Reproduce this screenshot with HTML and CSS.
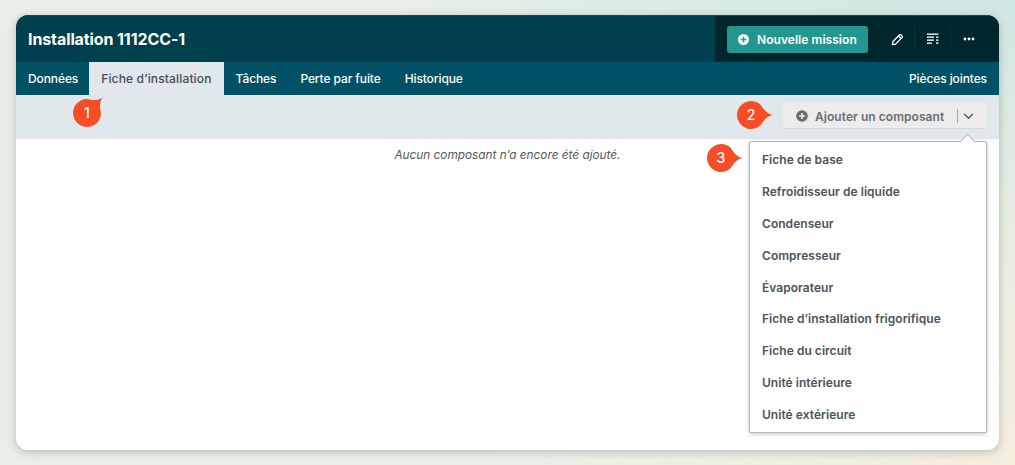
FILE: index.html
```html
<!DOCTYPE html>
<html lang="fr">
<head>
<meta charset="utf-8">
<title>Installation 1112CC-1</title>
<link rel="stylesheet" href="styles.css">
</head>
<body>
<main class="card">
  <header class="head">
    <h1 class="title">Installation 1112CC-1</h1>
    <div class="actions">
      <button class="primary">
        <svg class="plus" viewBox="0 0 12 12" width="11" height="11"><circle cx="6" cy="6" r="6" fill="#fff"/><path d="M6 3v6M3 6h6" stroke="#22968f" stroke-width="1.8"/></svg>
        Nouvelle mission
      </button>
      <div class="icon-btn">
        <svg class="pencil" viewBox="0 0 14 14" width="13" height="13" fill="none" stroke="#fff" stroke-width="1.4" stroke-linejoin="round"><path d="M1.5 12.500l.6-3.300 6.900-7a1.400 1.400 0 0 1 2 0l.8.800a1.400 1.400 0 0 1 0 2l-6.900 7z"/><path d="M8 3.300l2.700 2.700"/></svg>
      </div>
      <div class="icon-btn">
        <svg viewBox="0 0 12 12" width="12" height="12" fill="#fff"><rect x="0" y="0.500" width="11.500" height="1.300"/><rect x="0" y="3.500" width="7" height="1.300"/><rect x="9" y="3.500" width="2.500" height="1.300"/><rect x="0" y="6.500" width="7" height="1.300"/><rect x="9" y="6.500" width="2.500" height="1.300"/><rect x="0" y="9.500" width="5" height="1.300"/><rect x="9" y="9.500" width="2.500" height="1.300"/></svg>
      </div>
      <div class="icon-btn last">
        <svg viewBox="0 0 12 4" width="12" height="4" fill="#fff"><circle cx="2" cy="2" r="1.400"/><circle cx="6" cy="2" r="1.400"/><circle cx="10" cy="2" r="1.400"/></svg>
      </div>
    </div>
  </header>
  <nav class="tabs">
    <a class="tab">Données</a>
    <a class="tab active">Fiche d’installation</a>
    <a class="tab">Tâches</a>
    <a class="tab">Perte par fuite</a>
    <a class="tab">Historique</a>
    <a class="tab end">Pièces jointes</a>
  </nav>
  <div class="toolbar">
    <div class="add">
      <svg viewBox="0 0 12 12" width="12" height="12"><circle cx="6" cy="6" r="5.800" fill="#666b6f"/><path d="M6 3v6M3 6h6" stroke="#ececec" stroke-width="1.600"/></svg>
      <span class="add-label">Ajouter un composant</span>
      <span class="add-sep"></span>
      <svg class="chev" viewBox="0 0 12 8" width="11" height="7" fill="none" stroke="#4a5057" stroke-width="1.500"><path d="M1 1l5 5 5-5"/></svg>
    </div>
  </div>
  <p class="empty">Aucun composant n’a encore été ajouté.</p>

  <ul class="menu">
    <li>Fiche de base</li>
    <li>Refroidisseur de liquide</li>
    <li>Condenseur</li>
    <li>Compresseur</li>
    <li>Évaporateur</li>
    <li>Fiche d’installation frigorifique</li>
    <li>Fiche du circuit</li>
    <li>Unité intérieure</li>
    <li>Unité extérieure</li>
  </ul>
</main>

<div class="badge b1"><svg viewBox="0 0 38 30" width="38" height="30"><path class="drop" d="M14 1a14 14 0 0 1 9.500 3.700C26 8 29 14 36 15c-7 1-10 7-12.500 10.300A14 14 0 1 1 14 1z"/></svg><span>1</span></div>
<div class="badge b2"><svg viewBox="0 0 38 30" width="38" height="30"><path class="drop" d="M14 1a14 14 0 0 1 9.500 3.700C26 8 29 14 36 15c-7 1-10 7-12.500 10.300A14 14 0 1 1 14 1z"/></svg><span>2</span></div>
<div class="badge b3"><svg viewBox="0 0 38 30" width="38" height="30"><path class="drop" d="M14 1a14 14 0 0 1 9.500 3.700C26 8 29 14 36 15c-7 1-10 7-12.500 10.300A14 14 0 1 1 14 1z"/></svg><span>3</span></div>
</body>
</html>
```
FILE: styles.css
```css
* { box-sizing: border-box; }
html, body { margin: 0; height: 100%; }
body {
  position: relative;
  width: 1015px;
  height: 465px;
  overflow: hidden;
  padding: 15px 16px;
  font-family: Inter, "Liberation Sans", sans-serif;
  background:
    radial-gradient(circle at 100% 100%, #f5efdf 0, rgba(245, 239, 223, 0) 520px),
    radial-gradient(circle at 100% 0, #cbe6e4 0, rgba(203, 230, 228, 0) 620px),
    #e8efe7;
}
.card {
  position: relative;
  height: 435px;
  background: #fff;
  border-radius: 12px;
  box-shadow: 0 2px 8px rgba(0, 40, 50, .25);
  overflow: hidden;
}
.head {
  display: flex;
  justify-content: space-between;
  align-items: stretch;
  height: 47px;
  background: #003f4d;
  border-top: 1px solid #00505f;
}
.title {
  margin: 0;
  padding-left: 12px;
  align-self: center;
  color: #fff;
  font-size: 16px;
  font-weight: 700;
  line-height: 1;
  letter-spacing: -.1px;
}
.actions {
  display: flex;
  align-items: center;
  width: 284px;
  padding-left: 12px;
  background: #02262e;
}
.primary {
  display: flex;
  align-items: center;
  gap: 8px;
  width: 141px;
  height: 27px;
  margin-right: 11px;
  padding: 0 0 0 11px;
  border: 0;
  border-radius: 3px;
  background: #22968f;
  color: #fff;
  font: 600 12px Inter, "Liberation Sans", sans-serif;
  letter-spacing: .05px;
}
.icon-btn {
  display: flex;
  align-items: center;
  justify-content: center;
  width: 36px;
  height: 27px;
  border-right: 1px solid #07323b;
}
.icon-btn.last { border-right: 0; }
.pencil { margin-left: 2px; }
.tabs {
  display: flex;
  height: 33px;
  background: #005166;
}
.tab {
  display: flex;
  align-items: center;
  padding: 0 12px;
  color: #fff;
  font-size: 12px;
  font-weight: 500;
  letter-spacing: -.1px;
}
.tab:first-child { padding-right: 11px; }
.tab.active {
  background: #e1e8eb;
  color: #434c57;
  letter-spacing: .15px;
}
.tab.end { margin-left: auto; }
.toolbar {
  display: flex;
  justify-content: flex-end;
  height: 44px;
  padding: 8px 12px 0 0;
  background: #e1e8eb;
}
.add {
  display: flex;
  align-items: center;
  width: 204px;
  height: 25px;
  padding: 1px 0 0 13px;
  background: #ececec;
  border-radius: 2px;
  box-shadow: 0 1px 1px rgba(0, 0, 0, .06);
}
.add-label {
  margin-left: 7px;
  color: #6a6e72;
  font-size: 12px;
  font-weight: 600;
  letter-spacing: .05px;
  white-space: nowrap;
}
.add-sep {
  width: 1px;
  height: 14px;
  margin-left: 13px;
  background: #a9adb0;
}
.chev { margin-left: 5px; }
.empty {
  margin: 0;
  padding-top: 9px;
  text-align: center;
  color: #55595d;
  font-size: 11.8px;
  font-style: italic;
  line-height: 14px;
}
.menu {
  position: absolute;
  left: 733px;
  top: 126px;
  width: 238px;
  height: 292px;
  margin: 0;
  padding: 2px 0 0 12px;
  list-style: none;
  background: #fff;
  border: 1px solid #b1b9be;
  border-radius: 2px;
  box-shadow: 0 1px 4px rgba(0, 30, 40, .25);
  color: #4b535c;
  font-size: 12px;
  font-weight: 600;
  letter-spacing: .04px;
}
.menu::before {
  content: "";
  position: absolute;
  right: 13px;
  top: -6px;
  width: 10px;
  height: 10px;
  background: #fff;
  border-left: 1px solid #b1b9be;
  border-top: 1px solid #b1b9be;
  transform: rotate(45deg);
}
.menu li { height: 31.9px; line-height: 31.9px; }
.badge {
  position: absolute;
  width: 38px;
  height: 30px;
}
.badge svg { display: block; }
.drop { fill: #f64d27; }
.badge span {
  position: absolute;
  left: 0;
  top: 0;
  width: 28px;
  height: 30px;
  line-height: 30px;
  text-align: center;
  color: #fff;
  font-size: 14px;
  font-weight: 500;
}
.b1 { left: 73px; top: 98px; }
.b1 svg { transform-origin: 14px 15px; transform: rotate(-45deg); }
.b2 { left: 737px; top: 100px; }
.b3 { left: 707px; top: 143px; }
```
